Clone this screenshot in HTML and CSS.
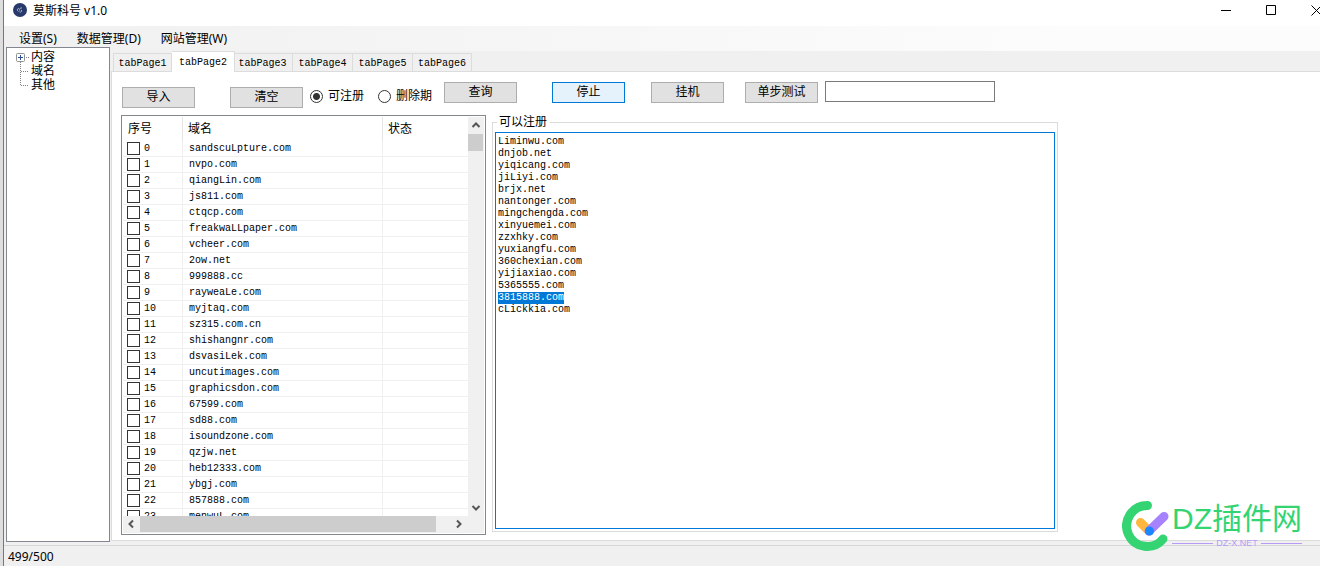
FILE: index.html
```html
<!DOCTYPE html>
<html lang="zh-CN">
<head>
<meta charset="utf-8">
<title>莫斯科号 v1.0</title>
<link rel="stylesheet" href="styles.css">
</head>
<body>
<div class="window">
  <header class="titlebar">
    <svg class="app-icon" viewBox="0 0 14 14" aria-hidden="true"><circle cx="7" cy="7" r="7" fill="#273a6b"/><path d="M6 5.500c-1.800-.5-2.300 2.300-.5 3M6.500 7.500c0-2 1-3 2.500-2.500M6.500 9c1.500.5 2.500-.5 2-2" fill="none" stroke="#c3cbe4" stroke-width=".8"/></svg>
    <h1 class="title">莫斯科号 v1.0</h1>
    <div class="window-controls">
      <button class="control" aria-label="最小化"><svg viewBox="0 0 11 11"><path d="M0 5.500h10"/></svg></button>
      <button class="control" aria-label="最大化"><svg viewBox="0 0 11 11"><path d="M.5.5h9v9h-9z"/></svg></button>
      <button class="control" aria-label="关闭"><svg viewBox="0 0 11 11"><path d="M.5.5l10 10M10.500.5l-10 10"/></svg></button>
    </div>
  </header>
  <nav class="menubar">
    <button class="menu">设置(S)</button>
    <button class="menu">数据管理(D)</button>
    <button class="menu">网站管理(W)</button>
  </nav>
  <main class="workspace">
    <aside class="tree">
      <ul class="nodes">
        <li class="node"><svg class="branch" viewBox="0 0 16 14" aria-hidden="true"><path class="dots" d="M5.500 12v2M11 7.500h3"/><rect x="1.500" y="3.500" width="8" height="8" rx="1" fill="#fff" stroke="#919191"/><path d="M3 7.500h5M5.500 5v5" stroke="#2b4fa0"/></svg>内容</li>
        <li class="node"><svg class="branch" viewBox="0 0 16 14" aria-hidden="true"><path class="dots" d="M5.500 0v14M6 7.500h8"/></svg>域名</li>
        <li class="node"><svg class="branch" viewBox="0 0 16 14" aria-hidden="true"><path class="dots" d="M5.500 0v8M6 7.500h8"/></svg>其他</li>
      </ul>
    </aside>
    <section class="tabs">
      <div class="tablist" role="tablist">
        <button class="tab" role="tab">tabPage1</button>
        <button class="tab active" role="tab" aria-selected="true">tabPage2</button>
        <button class="tab" role="tab">tabPage3</button>
        <button class="tab" role="tab">tabPage4</button>
        <button class="tab" role="tab">tabPage5</button>
        <button class="tab" role="tab">tabPage6</button>
      </div>
      <div class="page" role="tabpanel">
        <div class="toolbar">
          <div class="tools lower">
            <button class="btn">导入</button>
            <button class="btn">清空</button>
          </div>
          <div class="radios">
            <label class="radio"><input type="radio" name="kind" checked>可注册</label>
            <label class="radio"><input type="radio" name="kind">删除期</label>
          </div>
          <div class="tools upper">
            <button class="btn">查询</button>
            <button class="btn focused">停止</button>
          </div>
          <button class="btn idle">挂机</button>
          <button class="btn step">单步测试</button>
          <input class="entry" type="text" aria-label="测试域名">
        </div>
        <div class="panels">
          <div class="listview">
            <div class="list-body">
              <table class="grid">
                <colgroup><col class="col-no"><col class="col-name"><col></colgroup>
                <thead><tr><th>序号</th><th>域名</th><th>状态</th></tr></thead>
                <tbody>
                  <tr><td><label><input type="checkbox">0</label></td><td>sandscuLpture.com</td><td></td></tr>
                  <tr><td><label><input type="checkbox">1</label></td><td>nvpo.com</td><td></td></tr>
                  <tr><td><label><input type="checkbox">2</label></td><td>qiangLin.com</td><td></td></tr>
                  <tr><td><label><input type="checkbox">3</label></td><td>js811.com</td><td></td></tr>
                  <tr><td><label><input type="checkbox">4</label></td><td>ctqcp.com</td><td></td></tr>
                  <tr><td><label><input type="checkbox">5</label></td><td>freakwaLLpaper.com</td><td></td></tr>
                  <tr><td><label><input type="checkbox">6</label></td><td>vcheer.com</td><td></td></tr>
                  <tr><td><label><input type="checkbox">7</label></td><td>2ow.net</td><td></td></tr>
                  <tr><td><label><input type="checkbox">8</label></td><td>999888.cc</td><td></td></tr>
                  <tr><td><label><input type="checkbox">9</label></td><td>rayweaLe.com</td><td></td></tr>
                  <tr><td><label><input type="checkbox">10</label></td><td>myjtaq.com</td><td></td></tr>
                  <tr><td><label><input type="checkbox">11</label></td><td>sz315.com.cn</td><td></td></tr>
                  <tr><td><label><input type="checkbox">12</label></td><td>shishangnr.com</td><td></td></tr>
                  <tr><td><label><input type="checkbox">13</label></td><td>dsvasiLek.com</td><td></td></tr>
                  <tr><td><label><input type="checkbox">14</label></td><td>uncutimages.com</td><td></td></tr>
                  <tr><td><label><input type="checkbox">15</label></td><td>graphicsdon.com</td><td></td></tr>
                  <tr><td><label><input type="checkbox">16</label></td><td>67599.com</td><td></td></tr>
                  <tr><td><label><input type="checkbox">17</label></td><td>sd88.com</td><td></td></tr>
                  <tr><td><label><input type="checkbox">18</label></td><td>isoundzone.com</td><td></td></tr>
                  <tr><td><label><input type="checkbox">19</label></td><td>qzjw.net</td><td></td></tr>
                  <tr><td><label><input type="checkbox">20</label></td><td>heb12333.com</td><td></td></tr>
                  <tr><td><label><input type="checkbox">21</label></td><td>ybgj.com</td><td></td></tr>
                  <tr><td><label><input type="checkbox">22</label></td><td>857888.com</td><td></td></tr>
                  <tr><td><label><input type="checkbox">23</label></td><td>menwuL.com</td><td></td></tr>
                </tbody>
              </table>
            </div>
            <div class="vbar">
              <svg viewBox="0 0 16 16"><path d="M4.500 10l3.500-3.500 3.500 3.500"/></svg>
              <div class="vthumb"></div>
              <svg viewBox="0 0 16 16"><path d="M4.500 6l3.500 3.500 3.500-3.500"/></svg>
            </div>
            <div class="hbar">
              <svg viewBox="0 0 16 16"><path d="M10 4.500l-3.500 3.500 3.500 3.500"/></svg>
              <div class="hthumb"></div>
              <svg viewBox="0 0 16 16"><path d="M6 4.500l3.500 3.500-3.500 3.500"/></svg>
            </div>
          </div>
          <fieldset class="group">
            <legend><label for="result">可以注册</label></legend>
            <textarea id="result" class="result" spellcheck="false">Liminwu.com
dnjob.net
yiqicang.com
jiLiyi.com
brjx.net
nantonger.com
mingchengda.com
xinyuemei.com
zzxhky.com
yuxiangfu.com
360chexian.com
yijiaxiao.com
5365555.com
3815888.com
cLickkia.com</textarea>
          </fieldset>
        </div>
      </div>
    </section>
  </main>
  <footer class="status">499/500</footer>
</div>
<div class="watermark">
  <svg class="mark" viewBox="0 0 48 52" aria-hidden="true">
    <g fill="none" stroke-linecap="round">
      <path d="M25.500 5.500A20.500 20.500 0 1 0 41 39" stroke="#35d473" stroke-width="9"/>
      <path d="M18.500 22.500L27 31" stroke="#ffb83d" stroke-width="9"/>
      <path d="M27 31L42 16.500" stroke="#a682ff" stroke-width="9"/>
    </g>
    <circle cx="27.500" cy="31" r="4.500" fill="#1a86ff"/>
  </svg>
  <div class="brand">
    <div class="brand-name">DZ插件网</div>
    <div class="brand-url">DZ-X.NET</div>
  </div>
</div>
<script src="app.js"></script>
</body>
</html>
```
FILE: styles.css
```css
* { box-sizing: border-box; }
html, body { height: 100%; }
body {
  margin: 0;
  overflow: hidden;
  background: #dedede;
  color: #000;
  font: 12px/14px "Liberation Sans", "Noto Sans CJK SC", sans-serif;
}
button { font: inherit; color: inherit; padding: 0; border: 0; background: none; }
.window {
  height: 100%;
  margin-left: 3px;
  border-left: 1px solid #777;
  background: #f0f0f0;
  display: flex;
  flex-direction: column;
}
.titlebar { height: 26px; display: flex; background: #fff; padding-left: 9px; flex: none; }
.app-icon { width: 14px; height: 14px; margin-top: 3px; }
.title { margin: 3px 0 0 6px; font: 12px/16px "Noto Sans", "Noto Sans CJK SC", sans-serif; }
.window-controls { margin-left: auto; display: flex; gap: 34px; height: 21px; overflow: hidden; margin-right: -2px; }
.control { width: 11px; display: flex; align-items: center; }
.control svg { width: 11px; height: 11px; fill: none; stroke: #000; }
.menubar {
  height: 25px;
  flex: none;
  display: flex;
  gap: 20px;
  padding-left: 15px;
  background: linear-gradient(90deg, #f0f0f0, #fcfcfc 80%);
  font: 12px/24px "Noto Sans", "Noto Sans CJK SC", sans-serif;
}
.workspace { flex: 1; min-height: 0; display: flex; padding-left: 2px; gap: 1px; }
.tree {
  width: 104px;
  flex: none;
  margin: -4px 0 -1px;
  border: 1px solid #828790;
  background: #fff;
}
.nodes { list-style: none; margin: 0; padding: 2px 0 0 8px; }
.node { display: flex; height: 14px; }
.branch { width: 16px; height: 14px; fill: none; }
.dots { stroke: #808080; stroke-dasharray: 1 1; }
.tabs { flex: 1; min-width: 0; display: flex; flex-direction: column; }
.tablist { height: 20px; flex: none; display: flex; align-items: flex-end; padding-left: 2px; }
.tab {
  width: 60px;
  height: 18px;
  border: 1px solid #dcdcdc;
  border-width: 1px 1px 0 0;
  padding-top: 2px;
  font: 10px/16px "Liberation Mono", monospace;
}
.tab:first-child { width: 59px; border-left-width: 1px; }
.tab.active { width: 63px; height: 21px; margin: 0 -2px -1px 0; background: #fff; position: relative; }
.tab:last-child { width: 59px; }
.page {
  flex: 1;
  min-height: 0;
  display: flex;
  flex-direction: column;
  background: #fff;
  border: 1px solid #dcdcdc;
  border-right: 0;
  padding: 9px 10px 5px 9px;
}
.toolbar { display: flex; align-items: flex-start; height: 34px; flex: none; padding-left: 1px; }
.tools { display: flex; gap: 35px; }
.lower { padding-top: 6px; }
.btn { width: 73px; height: 21px; border: 1px solid #adadad; background: #e1e1e1; line-height: 19px; margin-top: 1px; }
.lower .btn { margin-top: 0; }
.btn.focused { border-color: #0078d7; background: #e5f1fb; }
.radios { display: flex; gap: 13px; padding: 8px 0 0 7px; }
.radio { display: flex; align-items: center; gap: 5px; width: 55px; height: 14px; white-space: nowrap; }
.radio input {
  appearance: none;
  width: 13px;
  height: 13px;
  flex: none;
  margin: 0;
  border: 1px solid #333;
  border-radius: 50%;
  background: #fff;
}
.radio input:checked { background: radial-gradient(circle, #333 3px, #fff 4px); }
.upper { padding-left: 11px; }
.idle { margin-left: 26px; }
.step { margin-left: 21px; }
.entry { width: 170px; height: 21px; margin-left: 7px; border: 1px solid #7a7a7a; outline: 0; }
.panels { flex: 1; min-height: 0; display: flex; gap: 6px; }
.listview {
  width: 365px;
  flex: none;
  border: 1px solid #828790;
  padding: 1px;
  background: #fff;
  display: grid;
  grid-template: minmax(0, 1fr) 17px / minmax(0, 1fr) 16px;
}
.list-body { overflow: hidden; }
.grid { width: 100%; table-layout: fixed; border-collapse: separate; border-spacing: 0; }
.col-no { width: 60px; }
.col-name { width: 200px; }
.grid th { height: 24px; padding: 0 5px; text-align: left; font-weight: 400; border-right: 1px solid #e5e5e5; }
.grid td {
  height: 16px;
  padding: 1px 0 0 6px;
  border: 1px solid #f0f0f0;
  border-width: 0 1px 1px 0;
  font: 10px/14px "Liberation Mono", monospace;
}
.grid td:first-child { padding: 0 0 0 4px; }
.grid th:last-child, .grid td:last-child { border-right: 0; }
.grid label { display: flex; align-items: center; gap: 4px; height: 15px; line-height: 15px; }
.grid input { appearance: none; width: 13px; height: 13px; margin: 0; border: 1px solid #333; background: #fff; }
.vbar, .hbar { background: #f0f0f0; display: flex; }
.vbar { flex-direction: column; }
.hbar { grid-column: 1 / 3; padding: 0 17px 1px 0; }
.vbar svg, .hbar svg { width: 16px; height: 16px; flex: none; fill: none; stroke: #555; stroke-width: 2; }
.vthumb { height: 17px; background: #cdcdcd; margin: 1px 1px auto 0; }
.hthumb { flex: 0 1 296px; background: #cdcdcd; margin: 0 auto 0 1px; }
.group {
  width: 566px;
  margin: 0 0 3px;
  padding: 3px 2px 2px;
  border: 1px solid #dcdcdc;
  display: flex;
  min-width: 0;
}
.group legend { padding: 0 3px 0 2px; margin-left: 2px; line-height: 14px; }
.result {
  width: 100%;
  height: 100%;
  display: block;
  resize: none;
  margin: 0;
  border: 1px solid #0078d7;
  outline: 0;
  padding: 3px 2px;
  font: 10px/12px "Liberation Mono", monospace;
  color: #000;
}
.result::selection { background: #0078d7; color: #fff; }
.status { height: 21px; flex: none; margin-top: 4px; border-top: 1px solid #d7d7d7; padding-left: 4px; font: 12px/22px "Noto Sans", sans-serif; }
.watermark { position: absolute; right: 18px; bottom: 14px; display: flex; gap: 2px; }
.mark { width: 48px; height: 52px; }
.brand-name { font: 30px/38px "Liberation Sans", "Noto Sans CJK SC", sans-serif; color: #35d473; white-space: nowrap; }
.brand-url { display: flex; align-items: center; gap: 3px; font: 9px/11px "Liberation Sans", sans-serif; color: #b79af5; }
.brand-url::before, .brand-url::after { content: ""; flex: 1; height: 1px; background: #b79af5; }
```
FILE: app.js
```js
const result = document.getElementById("result");
const current = "3815888.com";
const start = result.value.indexOf(current);
result.focus();
result.setSelectionRange(start, start + current.length);
```
